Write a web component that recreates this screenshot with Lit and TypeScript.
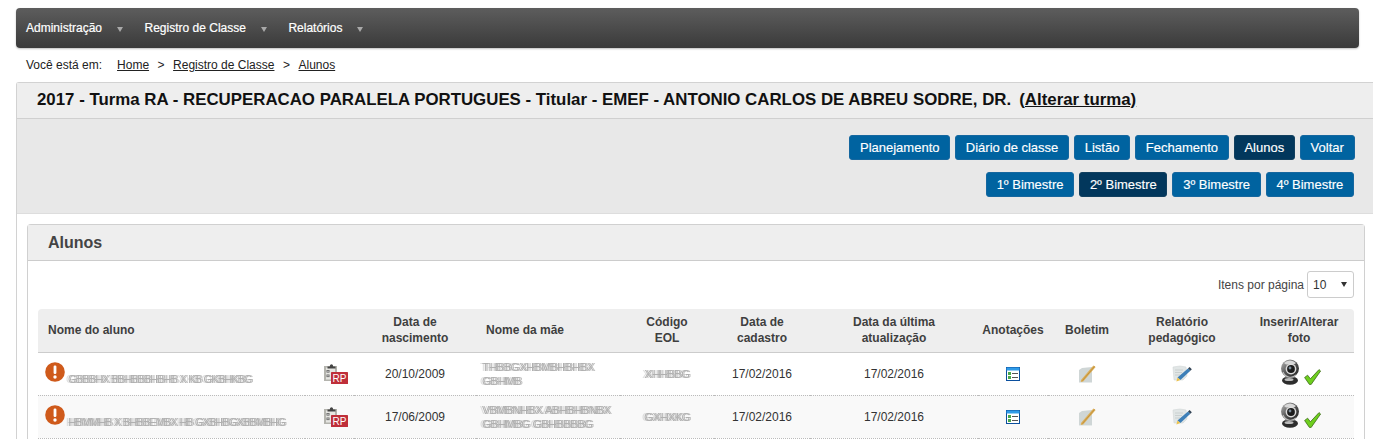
import { LitElement, html, css, svg } from "lit";
import { customElement } from "lit/decorators.js";

const alertIcon = svg`<svg class="ic" width="20" height="20" viewBox="0 0 20 20"><circle cx="10" cy="10" r="9.8" fill="#cf5a1b"/><rect x="8.6" y="3.6" width="2.8" height="8.4" rx="1.2" fill="#fff"/><circle cx="10" cy="15" r="1.7" fill="#fff"/></svg>`;
const rpIcon = svg`<svg class="ic" width="24" height="21" viewBox="0 0 24 21"><rect x="0" y="3" width="13" height="15" fill="#b4b4ae"/><rect x="2" y="4.5" width="9" height="12" fill="#e6e6e2"/><path d="M3.5 3.5h2.3c.2-3 3.2-3 3.4 0h2.3v2h-8z" fill="#444"/><rect x="2.5" y="7" width="3" height="2.6" fill="#666"/><rect x="3.4" y="7.8" width="1.2" height="1" fill="#eee"/><rect x="2.5" y="11.5" width="3" height="2.6" fill="#666"/><rect x="3.4" y="12.3" width="1.2" height="1" fill="#eee"/><rect x="7" y="9" width="17" height="12" rx=".6" fill="#bf2f3a"/><text x="15.5" y="18.6" font-size="10" font-family="Liberation Sans, sans-serif" text-anchor="middle" fill="#fff">RP</text></svg>`;
const listIcon = svg`<svg class="ic" width="14" height="14" viewBox="0 0 14 14"><rect width="14" height="14" fill="#0b4f9e"/><rect x="1" y="1" width="12" height="12" fill="#fff"/><rect x="0.5" y="0.5" width="13" height="3" fill="#2f9be8"/><rect x="2" y="5" width="3" height="3" fill="#48a84a"/><rect x="2" y="9" width="3" height="3" fill="#48a84a"/><rect x="6" y="6" width="6" height="1" fill="#555"/><rect x="6" y="10" width="6" height="1" fill="#555"/></svg>`;
const noteIcon = svg`<svg class="ic" width="18" height="20" viewBox="0 0 18 20"><path d="M1 6l3-2 10 -1v16H1z" fill="#cfd6d6"/><path d="M1 19h13v-1H1z" fill="#e6eaea"/><path d="M3 16l12.4-14.6 2.2 1.6L5.2 17.4l-2.4.6z" fill="#dcae58"/><path d="M4.4 16.6L16.6 2.4" stroke="#b98a35" stroke-width=".8"/></svg>`;
const penIcon = svg`<svg class="ic" width="20" height="17" viewBox="0 0 20 17"><path d="M1 2l7-1 6 1 1 9-4 4-9 0z" fill="#e1e6e6" stroke="#d2d6d6" stroke-width=".6"/><path d="M3 5h8M3 7.5h7M3 10h5" stroke="#c4caca" stroke-width=".8"/><path d="M5.5 12.5L16 3.4l2.4 2.4L8.4 15z" fill="#3d7fb8"/><path d="M16 3.4l2.4 2.4L19.8 4.2 17.6 2z" fill="#345"/><path d="M5.5 12.5L4.4 16.6l4-1.6z" fill="#edc24a"/></svg>`;
const camIcon = svg`<svg class="ic" width="18" height="26" viewBox="0 0 18 26"><defs><linearGradient id="cg" x1="0" y1="0" x2="1" y2="1"><stop offset="0" stop-color="#bbb"/><stop offset=".5" stop-color="#555"/><stop offset="1" stop-color="#1e1e1e"/></linearGradient></defs><ellipse cx="9" cy="21.5" rx="8" ry="4.2" fill="#2d2d2d"/><ellipse cx="8" cy="20.5" rx="4.5" ry="1.6" fill="#bbb"/><path d="M5 15h8l1 4H4z" fill="#666"/><circle cx="9" cy="9.5" r="9" fill="url(#cg)"/><path d="M3 4a8.4 8.4 0 0 1 12 0l-2 1.6H5z" fill="#d8d8d8"/><circle cx="10" cy="10" r="5.4" fill="#dcdcdc"/><circle cx="10" cy="10" r="3.9" fill="#1c1c1c"/><circle cx="9" cy="9" r="1.4" fill="#7b8c9a"/><path d="M2 13a8 8 0 0 0 13 3" stroke="#bbb" stroke-width="1.2" fill="none"/></svg>`;
const checkIcon = svg`<svg class="ic" width="17" height="16" viewBox="0 0 17 16"><path d="M0.6 8.5l3-2.3 2.8 3.6L15 .6l1.6 1.4-9.4 13.4h-1.8z" fill="#6ecf1e" stroke="#3f6b1c" stroke-width=".8" stroke-linejoin="round"/></svg>`;

type Row = { name: string; birth: string; mother: string[]; code: string };
const rows: Row[] = [
  { name: "GBBBHX BBHBBBHBHB X KB GKBHKBG", birth: "20/10/2009", mother: ["THBBGXHBMBHBHBX", "GBHMB"], code: "XHHBBG" },
  { name: "HBMMHB X BHBBEMBX HB GXBHBGXBBMBHG", birth: "17/06/2009", mother: ["VBMBNHBX ABHBHBNBX", "GBHMBG GBHBBBBG"], code: "GXHXKG" },
];

@customElement("app-root")
export class AppRoot extends LitElement {
  static styles = css`
    :host { display: block; font-family: "Liberation Sans", Arial, sans-serif; color: #222; padding: 8px 0 0 16px; height: 441px; overflow: hidden; box-sizing: border-box; }
    a { color: inherit; }
    .nav { width: 1343px; height: 40px; box-sizing: border-box; border-radius: 4px; background: linear-gradient(#5d5d5d, #3a3a3a); display: flex; align-items: center; padding: 0 0 0 10px; color: #fff; font-size: 12px; -webkit-text-stroke: 0.2px #fff; box-shadow: 0 1px 2px rgba(0,0,0,.25); }
    .nav span.item { margin-right: 21.5px; display: flex; align-items: center; gap: 15px; }
    .nav i { display: block; width: 0; height: 0; border-left: 3px solid transparent; border-right: 3px solid transparent; border-top: 5px solid #a9a9a9; margin-top: 3px; }
    .crumb { height: 34px; display: flex; align-items: center; padding-left: 10px; font-size: 12px; color: #222; }
    .crumb .lbl { margin-right: 15px; }
    .crumb .sep { margin: 0 8.5px; }
    .panel { border: 1px solid #d2d2d2; border-right: 0; border-bottom: 0; border-radius: 3px 0 0 0; }
    .title { height: 36px; background: #eee; border-bottom: 1px solid #d0d0d0; display: flex; align-items: center; padding: 0 0 2px 20px; box-sizing: border-box; font-size: 16.85px; font-weight: 700; color: #111; white-space: pre; }
    .title a { margin-left: 8px; }
    .bar { height: 95px; background: #e8e8e8; border-bottom: 1px solid #ddd; display: flex; flex-direction: column; align-items: flex-end; gap: 12px; padding: 16px 18.5px 0 0; box-sizing: border-box; }
    .btns { display: flex; gap: 5px; }
    .btns.second { margin-right: .5px; }
    .btn { height: 25px; box-sizing: border-box; padding: 0 9.7px; border-radius: 3px; background: #0063a0; color: #fff; font-size: 13px; display: flex; align-items: center; border: 1px solid #15679f; -webkit-text-stroke: 0.15px #fff; }
    .btn.on { background: #02375c; border-color: #12405f; }
    .wrap { padding: 10px 7px 0 10px; }
    .card { width: 1338px; box-sizing: border-box; border: 1px solid #d0d0d0; border-bottom: 0; border-radius: 4px 4px 0 0; background: #fff; }
    .card h2 { margin: 0; height: 36px; box-sizing: border-box; background: #eee; border-bottom: 1px solid #ccc; display: flex; align-items: center; padding-left: 20px; font-size: 16px; font-weight: 700; color: #444; }
    .pager { height: 48px; display: flex; justify-content: flex-end; align-items: flex-start; padding: 10px 10px 0 0; gap: 3px; font-size: 12px; color: #444; box-sizing: border-box; }
    .pager span { line-height: 29px; }
    .sel { width: 47px; height: 27px; box-sizing: border-box; border: 1px solid #ccc; border-radius: 3px; display: flex; align-items: center; justify-content: space-between; padding: 0 6px 0 5px; color: #333; }
    .sel i { width: 0; height: 0; border-left: 3px solid transparent; border-right: 3px solid transparent; border-top: 5px solid #333; }
    .tw { padding: 0 10px; }
    table { border-collapse: collapse; table-layout: fixed; width: 1316px; font-size: 12px; }
    th, td { box-sizing: border-box; }
    th { background: #eee; color: #3f3f3f; font-weight: 700; height: 43px; padding: 0; text-align: center; line-height: 16px; border-bottom: 1px solid #ccc; }
    thead tr th:first-child { border-radius: 4px 0 0 0; }
    thead tr th:last-child { border-radius: 0 4px 0 0; }
    th.l { text-align: left; padding-left: 10px; }
    td { height: 43px; padding: 0; text-align: center; color: #333; border-bottom: 1px dotted #bbb; }
    tr.alt td { background: #f9f9f9; }
    th.c10, td.c10 { padding-right: 6px; }
    td.c2 { padding-left: 13px; }
    .c1 { width: 267px; } .c2 { width: 49px; } .c3 { width: 122px; } .c4 { width: 144px; } .c5 { width: 94px; } .c6 { width: 96px; } .c7 { width: 168px; } .c8 { width: 70px; } .c9 { width: 78px; } .c10 { width: 118px; } .c11 { width: 110px; }
    .ic { display: inline-block; vertical-align: middle; }
    .namecell { display: flex; align-items: flex-start; gap: 3px; padding-left: 7px; }
    .blur { color: #b0b0b0; font-size: 11px; line-height: 14px; filter: blur(.4px); text-shadow: 1.5px 0 0 rgba(110,110,110,.45), -2px 0 0 rgba(200,200,200,.6); white-space: nowrap; letter-spacing: -.2px; }
    .nm { margin-top: 10px; font-size: 10.5px; letter-spacing: -.55px; }
    td.m { padding-left: 6px; text-align: left; }
    .cam { display: inline-flex; align-items: flex-end; gap: 5px; margin-left: 3px; }
    td.c2 svg { margin-top: -1px; }
  `;

  render() {
    const heads = [["Nome do aluno", "c1 l"], ["", "c2"], ["Data de<br>nascimento", "c3"], ["Nome da mãe", "c4 l"], ["Código<br>EOL", "c5"], ["Data de<br>cadastro", "c6"], ["Data da última<br>atualização", "c7"], ["Anotações", "c8"], ["Boletim", "c9"], ["Relatório<br>pedagógico", "c10"], ["Inserir/Alterar<br>foto", "c11"]];
    return html`
      <div class="nav">
        ${["Administração", "Registro de Classe", "Relatórios"].map((t) => html`<span class="item">${t}<i></i></span>`)}
      </div>
      <div class="crumb">
        <span class="lbl">Você está em:</span><a href="#">Home</a><span class="sep">&gt;</span><a href="#">Registro de Classe</a><span class="sep">&gt;</span><a href="#">Alunos</a>
      </div>
      <div class="panel">
        <div class="title">2017 - Turma RA - RECUPERACAO PARALELA PORTUGUES - Titular - EMEF - ANTONIO CARLOS DE ABREU SODRE, DR.<a href="#">(Alterar turma)</a></div>
        <div class="bar">
          <div class="btns">
            ${[["Planejamento", 0], ["Diário de classe", 0], ["Listão", 0], ["Fechamento", 0], ["Alunos", 1], ["Voltar", 0]].map(([t, on]) => html`<div class="btn ${on ? "on" : ""}">${t}</div>`)}
          </div>
          <div class="btns second">
            ${[["1º Bimestre", 0], ["2º Bimestre", 1], ["3º Bimestre", 0], ["4º Bimestre", 0]].map(([t, on]) => html`<div class="btn ${on ? "on" : ""}">${t}</div>`)}
          </div>
        </div>
        <div class="wrap">
          <div class="card">
            <h2>Alunos</h2>
            <div class="pager"><span>Itens por página</span><div class="sel">10<i></i></div></div>
            <div class="tw">
              <table>
                <thead><tr>${heads.map(([t, c]) => html`<th class=${c} .innerHTML=${t}></th>`)}</tr></thead>
                <tbody>
                  ${rows.map((r, i) => html`<tr class=${i ? "alt" : ""}>
                    <td><div class="namecell">${alertIcon}<div class="blur nm">${r.name}</div></div></td>
                    <td class="c2">${rpIcon}</td>
                    <td>${r.birth}</td>
                    <td class="m"><div class="blur">${r.mother.map((m) => html`<div>${m}</div>`)}</div></td>
                    <td><div class="blur">${r.code}</div></td>
                    <td>17/02/2016</td>
                    <td>17/02/2016</td>
                    <td>${listIcon}</td>
                    <td>${noteIcon}</td>
                    <td class="c10">${penIcon}</td>
                    <td><span class="cam">${camIcon}${checkIcon}</span></td>
                  </tr>`)}
                </tbody>
              </table>
            </div>
          </div>
        </div>
      </div>
    `;
  }
}
